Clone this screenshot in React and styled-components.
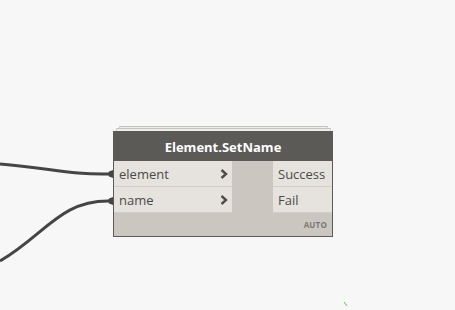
import React from 'react'
import styled, {createGlobalStyle} from 'styled-components';

const GlobalStyle = createGlobalStyle`
html, body {
  margin: 0;
  padding: 0;
  background: #f7f7f7;
}
`;

const Canvas = styled.div`
position: relative;
width: 455px;
height: 310px;
overflow: hidden;
background: #f7f7f7;
font-family: "Open Sans", "Liberation Sans", sans-serif;
`;

const Wires = styled.svg`
position: absolute;
left: 0;
top: 0;
`;

const StackCard = styled.div`
position: absolute;
left: ${p => p.x}px;
top: ${p => p.y}px;
width: ${p => p.w}px;
height: 100px;
background: #eeeeec;
border-top: 1px solid #c4c3c0;
border-left: 1px solid #d6d5d2;
border-right: 1px solid #d6d5d2;
`;

const Node = styled.div`
position: absolute;
left: 113px;
top: 131px;
width: 218px;
border: 1px solid #5b5a57;
background: #cbc7c0;
`;

const Header = styled.div`
height: 29px;
background: #5b5a57;
color: #ffffff;
font-weight: 700;
font-size: 13px;
display: flex;
align-items: center;
justify-content: center;
padding-top: 1px;
box-sizing: border-box;
`;

const Body = styled.div`
display: flex;
justify-content: space-between;
`;

const Column = styled.div`
display: flex;
flex-direction: column;
width: ${p => p.w}px;
`;

const Port = styled.div`
height: 25px;
display: flex;
align-items: center;
justify-content: space-between;
background: #e6e3de;
color: #4a4a48;
font-size: 13px;
padding: 0 4px 0 5px;
border-bottom: 1px solid #d2cec8;
box-sizing: content-box;
`;

const Footer = styled.div`
height: 23px;
display: flex;
align-items: center;
justify-content: flex-end;
padding-right: 5px;
font-size: 8px;
font-weight: 700;
color: #7a7873;
letter-spacing: 0.2px;
`;

const Chevron = () => (
  <svg width="8" height="10" viewBox="0 0 8 10">
    <path d="M1.5 1 L6 5 L1.5 9" fill="none" stroke="#4e4d4a" strokeWidth="2.4" />
  </svg>
);

const inputs = ['element', 'name'];
const outputs = ['Success', 'Fail'];

const App = () => {
  return (
    <Canvas>
      <GlobalStyle />
      <Wires width="455" height="310">
        <path d="M0 164 C 50 168, 70 175, 110 174" fill="none" stroke="#454545" strokeWidth="3" />
        <path d="M0 261 C 45 235, 60 200, 110 201" fill="none" stroke="#454545" strokeWidth="3" />
        <path d="M113 170 L109 171.5 L108 174 L109 176.5 L113 178 Z" fill="#454545" />
        <path d="M113 197 L109 198.5 L108 201 L109 203.5 L113 205 Z" fill="#454545" />
        <path d="M344 302 L347 306" stroke="#7fae6a" strokeWidth="1" />
      </Wires>
      <StackCard x={119} y={126} w={207} />
      <StackCard x={116} y={128} w={213} />
      <Node>
        <Header>Element.SetName</Header>
        <Body>
          <Column w={118}>
            {inputs.map((item, index) => (
              <Port key={index}>
                <span>{item}</span>
                <Chevron />
              </Port>
            ))}
          </Column>
          <Column w={59}>
            {outputs.map((item, index) => (
              <Port key={index}>
                <span>{item}</span>
              </Port>
            ))}
          </Column>
        </Body>
        <Footer>AUTO</Footer>
      </Node>
    </Canvas>
  )
}

export default App;
